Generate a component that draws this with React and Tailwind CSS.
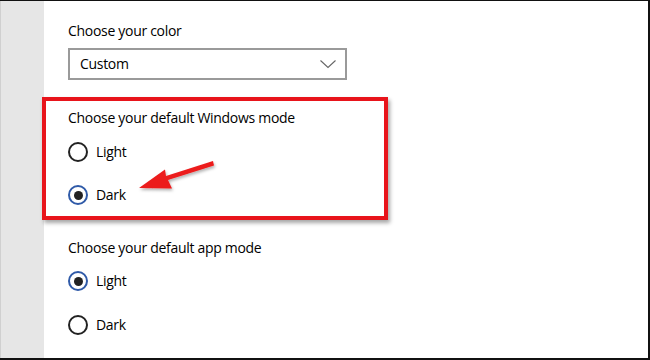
import React from "react";

function Radio({ checked, label }) {
  return (
    <div className="flex items-center h-5">
      {checked ? (
        <span className="w-5 h-5 rounded-full border-2 border-[#2f5aa8] flex items-center justify-center">
          <span className="w-[9px] h-[9px] rounded-full bg-[#222]" />
        </span>
      ) : (
        <span className="w-5 h-5 rounded-full border-2 border-[#222]" />
      )}
      <span className="ml-2 text-[14px] leading-5 tracking-[-0.3px] text-black">{label}</span>
    </div>
  );
}

export default function App() {
  return (
    <div
      className="relative w-[650px] h-[360px] overflow-hidden bg-white border-t border-t-[#111] border-r-2 border-r-[#111] border-b-2 border-b-[#111] flex"
      style={{ fontFamily: '"Open Sans", "Noto Sans", sans-serif' }}
    >
      {/* Sidebar */}
      <div className="w-[44px] h-full bg-[#e6e6e6] border-l border-l-[#d0d0d0]" />

      {/* Main */}
      <div className="flex-1 pl-6 pt-5 tracking-[-0.3px]">
        <div className="text-[14px] leading-5 text-black">Choose your color</div>
        <div className="mt-[7px] w-[279px] h-8 border-2 border-[#9a9a9a] flex items-center justify-between pl-[10px] pr-[8px]">
          <span className="text-[14px] leading-5 text-black">Custom</span>
          <svg width="18" height="10" viewBox="0 0 18 10" fill="none">
            <polyline points="1.5,1.5 9,8.5 16.5,1.5" stroke="#666" strokeWidth="1.1" />
          </svg>
        </div>

        <div className="mt-[28px] text-[14px] leading-5 text-black">
          Choose your default Windows mode
        </div>
        <div className="mt-[14px]">
          <Radio label="Light" />
        </div>
        <div className="mt-[23px]">
          <Radio checked label="Dark" />
        </div>

        <div className="mt-[33px] text-[14px] leading-5 text-black">
          Choose your default app mode
        </div>
        <div className="mt-[13px]">
          <Radio checked label="Light" />
        </div>
        <div className="mt-[24px]">
          <Radio label="Dark" />
        </div>
      </div>

      {/* Red highlight box */}
      <div className="absolute left-[42px] top-[96px] w-[346px] h-[123px] border-4 border-[#e8141b] shadow-[2px_3px_4px_rgba(0,0,0,0.35)]" />

      {/* Arrow */}
      <svg
        className="absolute left-0 top-0"
        width="650"
        height="360"
        viewBox="0 0 650 360"
      >
        <defs>
          <filter id="sh" x="-20%" y="-20%" width="140%" height="160%">
            <feDropShadow dx="1" dy="2" stdDeviation="1.5" floodColor="#000" floodOpacity="0.3" />
          </filter>
        </defs>
        <g filter="url(#sh)">
          <polygon
            points="213,160 214,164.5 168,179 172,187.5 139,187 165,168.5 166,175"
            fill="#ec1c1c"
          />
        </g>
      </svg>
    </div>
  );
}
